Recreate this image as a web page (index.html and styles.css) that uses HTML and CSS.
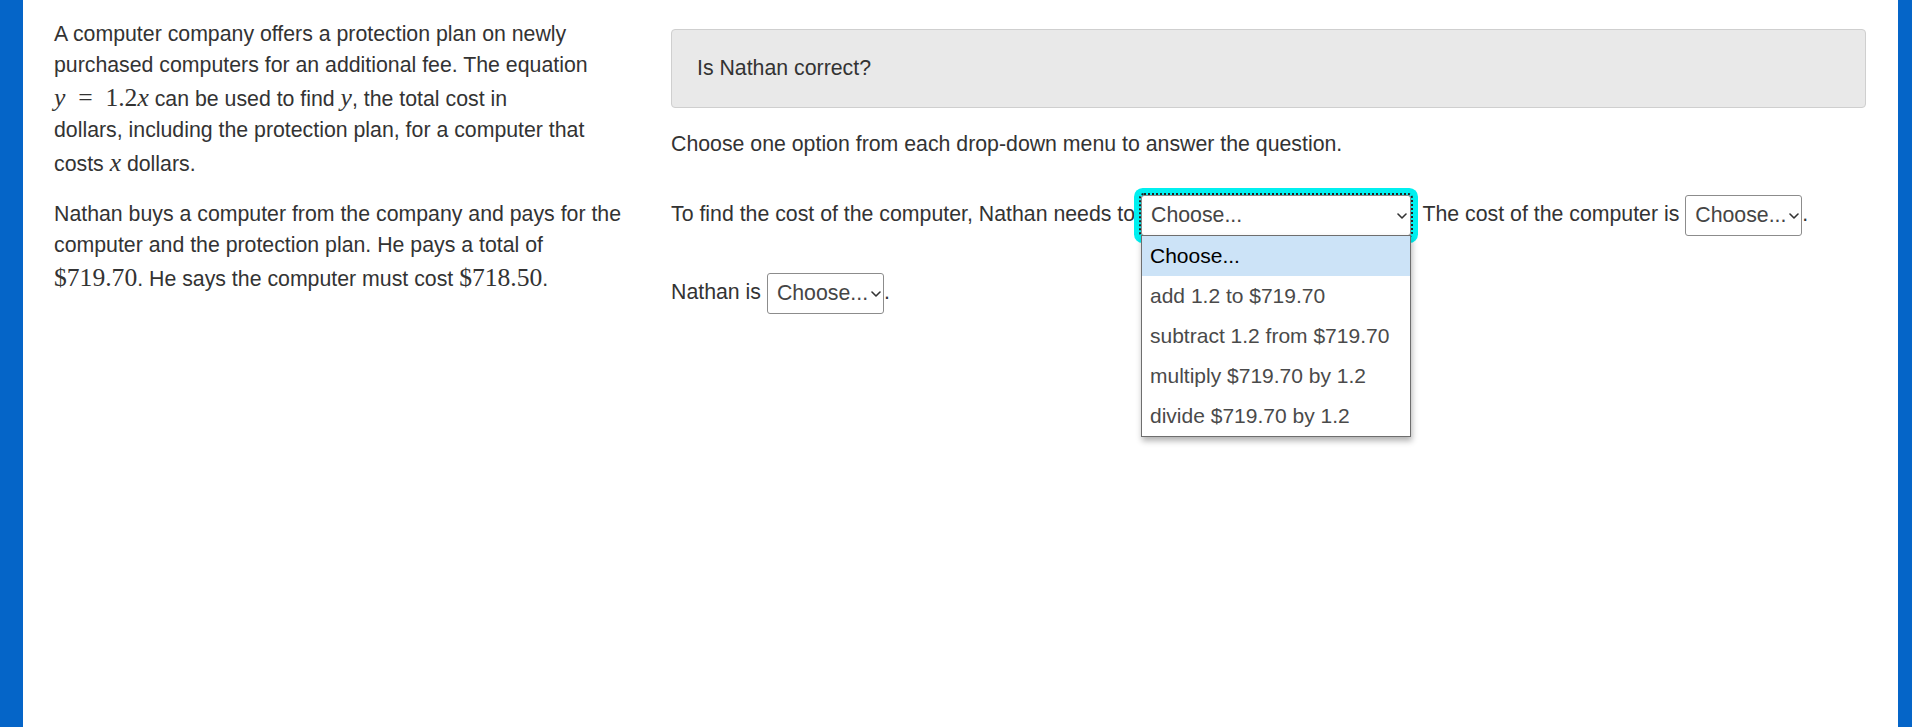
FILE: index.html
```html
<!DOCTYPE html>
<html lang="en">
<head>
<meta charset="utf-8">
<title>Is Nathan correct?</title>
<link rel="stylesheet" href="styles.css">
</head>
<body>
<div class="page">
  <div class="bar bar-left"></div>
  <main class="content">
    <section class="stimulus">
      <p>A computer company offers a protection plan on newly<br>purchased computers for an additional fee. The equation<br><span class="m"><i>y</i><span class="rel">=</span>1.2<i>x</i></span> can be used to find <span class="m"><i>y</i></span>, the total cost in<br>dollars, including the protection plan, for a computer that<br>costs <span class="m"><i>x</i></span> dollars.</p>
      <p>Nathan buys a computer from the company and pays for the<br>computer and the protection plan. He pays a total of<br><span class="m">$719.70</span>. He says the computer must cost <span class="m">$718.50</span>.</p>
    </section>
    <section class="question">
      <div class="prompt">Is Nathan correct?</div>
      <div class="instr">Choose one option from each drop-down menu to answer the question.</div>
      <div class="row">To find the cost of the computer, Nathan needs to <span class="dd dd-wide is-open" role="combobox" aria-expanded="true"><span class="dd-label">Choose...</span><svg class="chev" width="10" height="6" viewBox="0 0 10 6"><path d="M1 1 L5 5 L9 1" fill="none" stroke="#333" stroke-width="1.6" stroke-linecap="round" stroke-linejoin="round"/></svg><span class="dd-menu" role="listbox"><span class="opt sel" role="option">Choose...</span><span class="opt" role="option">add 1.2 to $719.70</span><span class="opt" role="option">subtract 1.2 from $719.70</span><span class="opt" role="option">multiply $719.70 by 1.2</span><span class="opt" role="option">divide $719.70 by 1.2</span></span></span>. The cost of the computer is <span class="dd" role="combobox"><span class="dd-label">Choose...</span><svg class="chev" width="10" height="6" viewBox="0 0 10 6"><path d="M1 1 L5 5 L9 1" fill="none" stroke="#333" stroke-width="1.6" stroke-linecap="round" stroke-linejoin="round"/></svg></span>.</div>
      <div class="row row2">Nathan is <span class="dd" role="combobox"><span class="dd-label">Choose...</span><svg class="chev" width="10" height="6" viewBox="0 0 10 6"><path d="M1 1 L5 5 L9 1" fill="none" stroke="#333" stroke-width="1.6" stroke-linecap="round" stroke-linejoin="round"/></svg></span>.</div>
    </section>
  </main>
  <div class="bar bar-right"></div>
</div>
</body>
</html>
```

FILE: styles.css
```css
* { box-sizing: border-box; }
html, body { margin: 0; height: 100%; }
body {
  font-family: "Liberation Sans", Arial, sans-serif;
  font-size: 21.3px;
  line-height: 31px;
  color: #333;
  background: #fff;
}
.page { display: flex; height: 100vh; min-height: 727px; }
.bar { flex: none; background: #0565c8; }
.bar-left { width: 23px; }
.bar-right { width: 14px; }
.content {
  flex: 1;
  display: grid;
  grid-template-columns: 571px 1fr;
  column-gap: 46px;
  align-content: start;
  padding: 0 32px 0 31px;
}
.stimulus { padding-top: 19px; }
.stimulus p { margin: 0 0 19px; white-space: nowrap; }
.m {
  font-family: "Liberation Serif", "Times New Roman", serif;
  font-size: 25.6px;
  line-height: 1.32;
}
.m i { font-style: italic; }
.rel { margin: 0 0.5em; }
.question { padding-top: 29px; }
.prompt {
  background: #e9e9e9;
  border: 1px solid #cfcfcf;
  border-radius: 4px;
  padding: 23px 25px 23px;
}
.instr { margin-top: 21px; }
.row { margin-top: 35px; white-space: nowrap; }
.row2 { margin-top: 37px; }
.dd {
  position: relative;
  display: inline-flex;
  align-items: center;
  justify-content: space-between;
  width: 117px;
  height: 41px;
  padding: 0 2px 0 9px;
  vertical-align: middle;
  border: 1px solid #8c8c8c;
  border-radius: 3px;
  background: #fff;
  color: #454545;
}
.dd-wide { width: 270px; padding-right: 3px; }
.chev { flex: none; }
.dd.is-open {
  z-index: 1;
  box-shadow: 0 0 0 7px #00f0f0;
  outline: 2px dotted #222;
  outline-offset: 0;
}
.dd-menu {
  position: absolute;
  top: 100%;
  left: -1px;
  right: -1px;
  z-index: 2;
  display: block;
  background: #fff;
  border: 1px solid #6e6e6e;
  box-shadow: 1px 4px 6px rgba(0, 0, 0, 0.3);
}
.opt {
  display: block;
  height: 40px;
  line-height: 40px;
  padding-left: 8px;
  font-size: 21px;
  color: #4a4a4a;
  white-space: nowrap;
}
.opt.sel { background: #cce3f7; color: #000; }
```
